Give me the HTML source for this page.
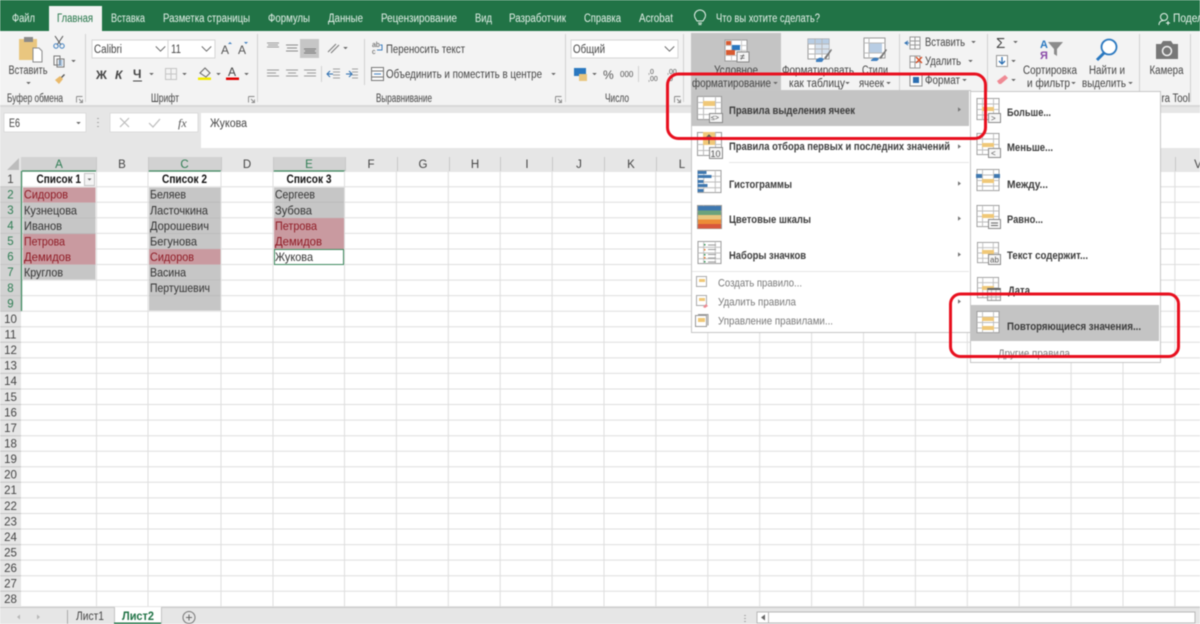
<!DOCTYPE html>
<html><head><meta charset="utf-8">
<style>
html,body{margin:0;padding:0;width:1200px;height:624px;overflow:hidden;background:#fff}
svg{display:block;filter:blur(.45px)}
text{font-family:"Liberation Sans",sans-serif;font-size:11px;fill:#444}
.tab{fill:#e6f1ea;font-size:11.5px}
.rb{fill:#444;font-size:11.5px}
.c{fill:#333;font-size:12px}
.r{fill:#8f1a24;font-size:12px}
.b{fill:#111;font-size:12px;font-weight:bold}
.h{fill:#444;font-size:11.5px;text-anchor:middle}
.g{fill:#2f7d54;font-size:11.5px;text-anchor:middle}
.m{fill:#3c3c3c;font-size:11px;font-weight:bold}
.d{fill:#7a7a7a;font-size:11px}
.gl{stroke:#dedede;stroke-width:1}
.bar{fill:#f0c878}
</style></head><body>
<svg width="1200" height="624" viewBox="0 0 1200 624" xmlns="http://www.w3.org/2000/svg" shape-rendering="geometricPrecision">
<defs>
<symbol id="tbl" viewBox="0 0 25 25" overflow="visible">
<rect x=".5" y=".5" width="24" height="23" fill="#fff" stroke="#9a9a9a"/>
<path d="M6.500 .5V23.500M18.500 .5V23.500M.5 6.500H24.500M.5 12.500H24.500M.5 18.500H24.500" stroke="#bdbdbd" fill="none"/>
</symbol>
<symbol id="arr" viewBox="0 0 6 4" overflow="visible"><path d="M0 0H6L3 3Z" fill="#666"/></symbol>
<symbol id="chev" viewBox="0 0 12 7" overflow="visible"><path d="M.5 .5L6 6L11.500 .5" fill="none" stroke="#555" stroke-width="1"/></symbol>
<symbol id="lau" viewBox="0 0 7 7" overflow="visible"><path d="M.5 .5H6.500M.5 .5V6.500M3 3L6.500 6.500M6.500 3.500V6.500H3.500" fill="none" stroke="#888" stroke-width=".9"/></symbol>
<symbol id="mar" viewBox="0 0 4 6" overflow="visible"><path d="M0 0L4 3L0 6Z" fill="#777"/></symbol>
</defs>

<!-- base -->
<rect width="1200" height="624" fill="#fff"/>
<rect width="1200" height="31" fill="#217346"/>
<rect y="31" width="1200" height="75" fill="#f3f3f3"/>
<rect y="105" width="1200" height="2" fill="#d8d8d8"/>
<rect y="107" width="1200" height="50" fill="#e6e6e6"/>

<!-- tabs -->
<rect x="49" y="6" width="53" height="25" fill="#f3f3f3"/>
<text class="tab" x="12" y="22" textLength="23" lengthAdjust="spacingAndGlyphs">Файл</text>
<text x="57" y="22" textLength="36" lengthAdjust="spacingAndGlyphs" style="fill:#217346;font-size:11.5px">Главная</text>
<text class="tab" x="111" y="22" textLength="34" lengthAdjust="spacingAndGlyphs">Вставка</text>
<text class="tab" x="163" y="22" textLength="87" lengthAdjust="spacingAndGlyphs">Разметка страницы</text>
<text class="tab" x="268" y="22" textLength="42" lengthAdjust="spacingAndGlyphs">Формулы</text>
<text class="tab" x="328" y="22" textLength="35" lengthAdjust="spacingAndGlyphs">Данные</text>
<text class="tab" x="381" y="22" textLength="76" lengthAdjust="spacingAndGlyphs">Рецензирование</text>
<text class="tab" x="475" y="22" textLength="17" lengthAdjust="spacingAndGlyphs">Вид</text>
<text class="tab" x="509" y="22" textLength="57" lengthAdjust="spacingAndGlyphs">Разработчик</text>
<text class="tab" x="584" y="22" textLength="37" lengthAdjust="spacingAndGlyphs">Справка</text>
<text class="tab" x="639" y="22" textLength="34" lengthAdjust="spacingAndGlyphs">Acrobat</text>
<path d="M697 21c-1-2-2.500-3-2.500-5.500a5.500 5.500 0 0 1 11 0c0 2.500-1.500 3.500-2.500 5.500zM698 23h4M698.500 24.500h3" fill="none" stroke="#e6f1ea" stroke-width="1"/>
<text class="tab" x="716" y="22" textLength="104" lengthAdjust="spacingAndGlyphs">Что вы хотите сделать?</text>
<circle cx="1164" cy="17" r="3.500" fill="none" stroke="#e6f1ea"/>
<path d="M1159 25c0-3 2-4.500 5-4.500M1166 23h4M1168 21v4" fill="none" stroke="#e6f1ea"/>
<text class="tab" x="1173" y="22" textLength="30" lengthAdjust="spacingAndGlyphs">Подел</text>

<!-- ribbon separators -->
<path d="M85.500 34V102M257.500 34V102M565.500 34V102M683.500 34V102M899.500 34V102M987.500 34V102M1139.500 34V102M1190.500 34V102" stroke="#d0d0d0"/>

<!-- clipboard group -->
<rect x="19" y="39" width="18" height="21" fill="#e9c67f"/>
<rect x="24" y="37" width="9" height="5" fill="#8a8a8a"/>
<path d="M33 48h6l3 3v11H33z" fill="#fff" stroke="#8a8a8a"/>
<text class="rb" x="8.500" y="74" textLength="39" lengthAdjust="spacingAndGlyphs">Вставить</text>
<use href="#arr" x="26" y="82" width="5" height="3"/>
<path d="M55 36L61 45M63 36L57 45" stroke="#555" fill="none"/>
<circle cx="56" cy="46" r="2.200" fill="none" stroke="#3f7fbf"/><circle cx="62" cy="46" r="2.200" fill="none" stroke="#3f7fbf"/>
<path d="M54 56h6v9h-6zM57 59h7v8h-7z" fill="#f8f8f8" stroke="#777"/>
<path d="M58.500 61h4M58.500 63h4M58.500 65h4" stroke="#3f7fbf" stroke-width=".7"/>
<use href="#arr" x="71" y="60" width="5" height="3"/>
<path d="M55 80l5-4 3 3-4 5z" fill="#e9b96a"/><path d="M61 77l3-3 1 1-3 3z" fill="#555"/>
<text class="rb" x="7" y="102" textLength="56" lengthAdjust="spacingAndGlyphs">Буфер обмена</text>
<use href="#lau" x="76" y="96" width="7" height="7"/>

<!-- font group -->
<rect x="92" y="40" width="76" height="18" fill="#fff" stroke="#d5d5d5"/>
<rect x="168" y="40" width="47" height="18" fill="#fff" stroke="#d5d5d5"/>
<text class="rb" x="94" y="53" textLength="28" lengthAdjust="spacingAndGlyphs">Calibri</text>
<text class="rb" x="171" y="53" textLength="10" lengthAdjust="spacingAndGlyphs">11</text>
<use href="#chev" x="155" y="46" width="11" height="6"/>
<use href="#chev" x="201" y="46" width="11" height="6"/>
<text x="221" y="54" style="font-size:12px;fill:#555">A</text><path d="M228 44l2-2 2 2z" fill="#3f7fbf"/>
<text x="238" y="54" style="font-size:12px;fill:#555">A</text><path d="M244 42l2 2 2-2z" fill="#3f7fbf"/>
<text x="96" y="79" style="font-size:12px;font-weight:bold;fill:#444">Ж</text>
<text x="115" y="79" style="font-size:12px;font-weight:bold;font-style:italic;fill:#444">К</text>
<text x="133" y="78" style="font-size:12px;font-weight:bold;fill:#444">Ч</text><path d="M133 81h9" stroke="#444"/>
<use href="#arr" x="149" y="73" width="5" height="3"/>
<path d="M165.500 68.500h11v11h-11zM171 68.500v11M165.500 74h11" fill="none" stroke="#c4c4c4"/>
<use href="#arr" x="182" y="73" width="5" height="3"/>
<path d="M200 73l5-5 5 5-4 4z" fill="#f4f4f4" stroke="#666"/>
<rect x="198" y="77.500" width="13" height="2.500" fill="#f2e900"/>
<use href="#arr" x="216" y="73" width="5" height="3"/>
<text x="228" y="76" style="font-size:12px;fill:#444">A</text>
<rect x="226" y="77.500" width="13" height="2.500" fill="#e00000"/>
<use href="#arr" x="244" y="73" width="5" height="3"/>
<text class="rb" x="151" y="102" textLength="28" lengthAdjust="spacingAndGlyphs">Шрифт</text>
<use href="#lau" x="248" y="96" width="7" height="7"/>

<!-- alignment -->
<rect x="300" y="39" width="19" height="19" fill="#c6c6c6"/>
<path d="M267 43h12M268 45h10M267 47h12" stroke="#9a9a9a"/>
<path d="M286 45h12M287 48h10M286 51h12" stroke="#8a8a8a"/>
<path d="M304 49h12M305 51h10M304 53h12" stroke="#777"/>
<path d="M328 52l8-8M331 53l8-8" stroke="#777" fill="none"/>
<use href="#arr" x="343" y="47" width="5" height="3"/>
<path d="M267 70h12M267 73h9M267 76h12M286 70h12M288 73h8M286 76h12M304 70h12M307 73h9M304 76h12" stroke="#9a9a9a"/>
<path d="M321.500 66v16" stroke="#d0d0d0"/>
<path d="M333 69h7M333 72h7M333 75h7M333 78h7" stroke="#a0a0a0"/><path d="M333 74h-5M330 71l-3 3 3 3" stroke="#2a6db0" fill="none"/>
<path d="M352 69h6M352 72h6M352 75h6M352 78h6" stroke="#a0a0a0"/><path d="M346 74h5M349 71l3 3-3 3" stroke="#2a6db0" fill="none"/>
<path d="M364.500 39v46" stroke="#d0d0d0"/>
<text x="372" y="47" style="font-size:7px;fill:#555">ab</text><text x="372" y="54" style="font-size:7px;fill:#555">c</text><path d="M380 45h2v5h-5" stroke="#3f7fbf" fill="none"/>
<path d="M371.500 67.500h12v13h-12zM371.500 71h12M371.500 77h12" fill="#fbfbfb" stroke="#777"/><path d="M374 74h7" stroke="#3f7fbf"/>
<text class="rb" x="386" y="53" textLength="79" lengthAdjust="spacingAndGlyphs">Переносить текст</text>
<text class="rb" x="386" y="78" textLength="156" lengthAdjust="spacingAndGlyphs">Объединить и поместить в центре</text>
<use href="#arr" x="551" y="73" width="5" height="3"/>
<text class="rb" x="376" y="102" textLength="56" lengthAdjust="spacingAndGlyphs">Выравнивание</text>
<use href="#lau" x="555" y="96" width="7" height="7"/>

<!-- number -->
<rect x="571" y="40" width="107" height="18" fill="#fff" stroke="#d5d5d5"/>
<text class="rb" x="573" y="53" textLength="32" lengthAdjust="spacingAndGlyphs">Общий</text>
<use href="#chev" x="664" y="46" width="11" height="6"/>
<rect x="574" y="68" width="12" height="8" fill="#2a78c0"/><rect x="579" y="74" width="8" height="7" fill="#e9c67f"/>
<use href="#arr" x="592" y="73" width="5" height="3"/>
<text x="603" y="79" style="font-size:12px;fill:#555">%</text>
<text x="620" y="77" style="font-size:8px;fill:#555">000</text>
<path d="M638.500 66v16" stroke="#d0d0d0"/>
<text x="648" y="74" style="font-size:7px;fill:#555">,0</text><text x="648" y="81" style="font-size:7px;fill:#555">,00</text>
<text x="667" y="74" style="font-size:7px;fill:#555">,00</text><text x="667" y="81" style="font-size:7px;fill:#555">,0</text>
<text class="rb" x="605" y="102" textLength="24" lengthAdjust="spacingAndGlyphs">Число</text>
<use href="#lau" x="674" y="96" width="7" height="7"/>

<!-- cond format button -->
<rect x="691" y="33" width="90" height="58" fill="#c4c4c4"/>
<rect x="725" y="40" width="22" height="21" fill="#fff" stroke="#999"/>
<path d="M731.500 40v21M741.500 40v21M725 45.500h22M725 50.500h22M725 55.500h22" stroke="#c8c8c8"/>
<rect x="726" y="41" width="5" height="4" fill="#d85a30"/><rect x="732" y="45" width="8" height="5" fill="#2a78c0"/><rect x="726" y="50" width="9" height="5" fill="#d85a30"/>
<rect x="737" y="52" width="12" height="10" fill="#f4f4f4" stroke="#888"/>
<text x="740" y="60" style="font-size:9px;fill:#444">≠</text>
<text class="rb" x="714" y="74" textLength="44" lengthAdjust="spacingAndGlyphs">Условное</text>
<text class="rb" x="692" y="87" textLength="79" lengthAdjust="spacingAndGlyphs">форматирование</text>
<use href="#arr" x="773" y="82" width="5" height="3"/>

<!-- format table / styles -->
<rect x="808" y="39" width="21" height="20" fill="#fff" stroke="#999"/>
<rect x="808" y="39" width="21" height="5" fill="#b8cde4"/><rect x="815" y="44" width="14" height="10" fill="#d5e1ef"/>
<path d="M815 39v20M822 39v20M808 44h21M808 49h21M808 54h21" stroke="#b8b8b8"/>
<path d="M816 60c3-3 5-3 8-1l-2 3h-6z" fill="#3f7fbf"/><path d="M824 58l7-9 1 1-6 9z" fill="#777"/>
<rect x="864" y="38" width="21" height="20" fill="#fff" stroke="#999"/>
<rect x="869" y="43" width="13" height="10" fill="#b8cde4"/>
<path d="M864 43h21M864 53h21M869 38v20" stroke="#b8b8b8"/>
<path d="M871 60c3-3 5-3 8-1l-2 2h-6z" fill="#3f7fbf"/><path d="M879 58l7-9 1 1-6 9z" fill="#777"/>
<text class="rb" x="782" y="74" textLength="72" lengthAdjust="spacingAndGlyphs">Форматировать</text>
<text class="rb" x="789" y="87" textLength="56" lengthAdjust="spacingAndGlyphs">как таблицу</text>
<use href="#arr" x="845" y="82" width="5" height="3"/>
<text class="rb" x="862" y="74" textLength="26" lengthAdjust="spacingAndGlyphs">Стили</text>
<text class="rb" x="859" y="87" textLength="25" lengthAdjust="spacingAndGlyphs">ячеек</text>
<use href="#arr" x="886" y="82" width="5" height="3"/>

<!-- cells -->
<path d="M910 37h10v12h-10zM910 41h10M910 45h10M915 37v12" fill="#fbfbfb" stroke="#999"/><path d="M909 43h-3M908 41l-3 2 3 2" stroke="#2a6db0" fill="none"/>
<path d="M910 56h10v12h-10zM915 56v12M910 62h10" fill="#fbfbfb" stroke="#999"/><path d="M916 57l6 6M922 57l-6 6" stroke="#d84a20" stroke-width="1.300"/>
<path d="M910 74h12v12h-12z" fill="#fbfbfb" stroke="#888"/><rect x="913" y="77" width="6" height="6" fill="#2a6db0"/>
<text class="rb" x="925" y="46" textLength="40" lengthAdjust="spacingAndGlyphs">Вставить</text>
<use href="#arr" x="971" y="41" width="5" height="3"/>
<text class="rb" x="925" y="65" textLength="36" lengthAdjust="spacingAndGlyphs">Удалить</text>
<use href="#arr" x="968" y="60" width="5" height="3"/>
<text class="rb" x="925" y="84" textLength="35" lengthAdjust="spacingAndGlyphs">Формат</text>
<use href="#arr" x="962" y="79" width="5" height="3"/>

<!-- editing -->
<text x="996" y="48" style="font-size:15px;fill:#444">Σ</text>
<use href="#arr" x="1013" y="41" width="5" height="3"/>
<rect x="996.500" y="55.500" width="11" height="11" fill="#fff" stroke="#999"/><path d="M1002 57v7M999 61l3 3 3-3" stroke="#2a6db0" stroke-width="1.300" fill="none"/>
<use href="#arr" x="1011" y="60" width="5" height="3"/>
<path d="M997 81l8-6 3 3-7 6h-2z" fill="#ef8a94"/>
<use href="#arr" x="1011" y="79" width="5" height="3"/>
<text x="1040" y="48" style="font-size:11px;font-weight:bold;fill:#2a78c0">А</text>
<text x="1040" y="59" style="font-size:11px;font-weight:bold;fill:#8a4aa8">Я</text>
<path d="M1048 42h15l-6 7v7l-3-2v-5z" fill="#8c8c8c"/>
<text class="rb" x="1023" y="74" textLength="54" lengthAdjust="spacingAndGlyphs">Сортировка</text>
<text class="rb" x="1027" y="87" textLength="43" lengthAdjust="spacingAndGlyphs">и фильтр</text>
<use href="#arr" x="1071" y="82" width="5" height="3"/>
<circle cx="1109" cy="47" r="7.500" fill="#fff" stroke="#2a78c0" stroke-width="1.800"/>
<path d="M1104 53l-7 7" stroke="#2a78c0" stroke-width="3"/>
<text class="rb" x="1089" y="74" textLength="36" lengthAdjust="spacingAndGlyphs">Найти и</text>
<text class="rb" x="1082" y="87" textLength="44" lengthAdjust="spacingAndGlyphs">выделить</text>
<use href="#arr" x="1128" y="82" width="5" height="3"/>
<path d="M1156 44h5l2-3h8l2 3h5v15h-22z" fill="#777"/>
<circle cx="1167" cy="51" r="4.500" fill="#777" stroke="#f3f3f3" stroke-width="1.500"/>
<text class="rb" x="1149.500" y="74" textLength="34" lengthAdjust="spacingAndGlyphs">Камера</text>
<text class="rb" x="1136" y="102" textLength="54" lengthAdjust="spacingAndGlyphs">Camera Tool</text>

<!-- formula bar -->
<rect x="4" y="113" width="82" height="19" fill="#fff" stroke="#dcdcdc"/>
<text class="rb" x="9" y="127" textLength="11" lengthAdjust="spacingAndGlyphs">E6</text>
<use href="#arr" x="76" y="122" width="5" height="3"/>
<path d="M98 118v1M98 122v1M98 126v1" stroke="#999" stroke-width="1.500"/>
<rect x="110" y="113" width="88" height="19" fill="#fff" stroke="#dcdcdc"/>
<path d="M120 118l9 9M129 118l-9 9" stroke="#bcbcbc" stroke-width="1.200"/>
<path d="M149 123l4 4 7-8" stroke="#bcbcbc" stroke-width="1.200" fill="none"/>
<text x="178" y="127" style="font-family:'Liberation Serif',serif;font-style:italic;font-size:12px;fill:#555">fx</text>
<rect x="201" y="113" width="999" height="35" fill="#fff"/>
<text class="rb" x="210" y="127" textLength="37" lengthAdjust="spacingAndGlyphs">Жукова</text>

<!-- col headers -->
<rect x="0" y="157" width="1200" height="15" fill="#e6e6e6"/>
<rect x="21" y="157" width="76" height="14" fill="#d2d2d2"/>
<rect x="148" y="157" width="73" height="14" fill="#d2d2d2"/>
<rect x="273" y="157" width="72" height="14" fill="#d2d2d2"/>
<path d="M22 171H97M148 171H221M273 171H345" stroke="#3f8a60" stroke-width="1.300"/>
<path d="M7 170L19 170V158Z" fill="#bdbdbd"/>
<path d="M96.500 157v14M148.500 157v14M221.500 157v14M273.500 157v14M345.500 157v14M397.500 157v14M449.500 157v14M500.500 157v14M552.500 157v14M604.500 157v14M656.500 157v14" stroke="#c8c8c8"/>
<text class="g" x="59" y="168">A</text><text class="h" x="122" y="168">B</text><text class="g" x="184.500" y="168">C</text><text class="h" x="247" y="168">D</text><text class="g" x="309" y="168">E</text><text class="h" x="371" y="168">F</text><text class="h" x="423" y="168">G</text><text class="h" x="475" y="168">H</text><text class="h" x="527" y="168">I</text><text class="h" x="579" y="168">J</text><text class="h" x="631" y="168">K</text><text class="h" x="682" y="168">L</text>
<path d="M1175.500 157v14" stroke="#c8c8c8"/><text class="h" x="1198" y="168">V</text>

<!-- row headers -->
<rect x="0" y="171" width="21" height="436" fill="#e6e6e6"/>
<rect x="0" y="186.700" width="21" height="124.400" fill="#d2d2d2"/>

<!-- grid -->
<g class="gl">
<path class="gl" fill="none" d="M21 186.700H1200M21 202.300H1200M21 217.800H1200M21 233.400H1200M21 249H1200M21 264.500H1200M21 280.100H1200M21 295.600H1200M21 311.200H1200M21 326.800H1200M21 342.300H1200M21 357.900H1200M21 373.400H1200M21 389H1200M21 404.500H1200M21 420.100H1200M21 435.700H1200M21 451.200H1200M21 466.800H1200M21 482.300H1200M21 497.900H1200M21 513.500H1200M21 529H1200M21 544.600H1200M21 560.100H1200M21 575.700H1200M21 591.200H1200M21 606.800H1200"/>
<path class="gl" fill="none" d="M96.500 171V607M148 171V607M221 171V607M273 171V607M344.500 171V607M396.400 171V607M448.300 171V607M500.200 171V607M552.100 171V607M604 171V607M655.900 171V607M707.800 171V607M759.700 171V607M811.600 171V607M863.500 171V607M915.400 171V607M967.300 171V607M1019.200 171V607M1071.100 171V607M1123 171V607M1174.900 171V607"/>
</g>
<path d="M21.500 171V311" stroke="#3f8a60" stroke-width="1.300"/>
<path d="M0 186.700H21M0 202.300H21M0 217.800H21M0 233.400H21M0 249H21M0 264.500H21M0 280.100H21M0 295.600H21M0 311.200H21M0 326.800H21M0 342.300H21M0 357.900H21M0 373.400H21M0 389H21M0 404.500H21M0 420.100H21M0 435.700H21M0 451.200H21M0 466.800H21M0 482.300H21M0 497.900H21M0 513.500H21M0 529H21M0 544.600H21M0 560.100H21M0 575.700H21M0 591.200H21" stroke="#c4c4c4" fill="none"/>
<text class="h" x="10.500" y="183">1</text>
<text class="g" x="10.500" y="198.500">2</text><text class="g" x="10.500" y="214">3</text><text class="g" x="10.500" y="229.500">4</text><text class="g" x="10.500" y="245">5</text><text class="g" x="10.500" y="260.500">6</text><text class="g" x="10.500" y="276">7</text><text class="g" x="10.500" y="292">8</text><text class="g" x="10.500" y="307.500">9</text>
<text class="h" x="10.500" y="323">10</text><text class="h" x="10.500" y="338.500">11</text><text class="h" x="10.500" y="354">12</text><text class="h" x="10.500" y="369.500">13</text><text class="h" x="10.500" y="385">14</text><text class="h" x="10.500" y="401">15</text><text class="h" x="10.500" y="416.500">16</text><text class="h" x="10.500" y="432">17</text><text class="h" x="10.500" y="447.500">18</text><text class="h" x="10.500" y="463">19</text><text class="h" x="10.500" y="478.500">20</text><text class="h" x="10.500" y="494">21</text><text class="h" x="10.500" y="510">22</text><text class="h" x="10.500" y="525.500">23</text><text class="h" x="10.500" y="541">24</text><text class="h" x="10.500" y="556.500">25</text><text class="h" x="10.500" y="572">26</text><text class="h" x="10.500" y="587.500">27</text><text class="h" x="10.500" y="603">28</text>

<!-- cell fills -->
<rect x="23" y="187.500" width="72.500" height="92" fill="#c6c6c6"/>
<rect x="23" y="187.500" width="72.500" height="15" fill="#c99aa0"/>
<rect x="23" y="233.500" width="72.500" height="31" fill="#c99aa0"/>
<rect x="149" y="187.500" width="71.500" height="123" fill="#c6c6c6"/>
<rect x="149" y="249" width="71.500" height="15.500" fill="#c99aa0"/>
<rect x="274" y="187.500" width="70" height="30.500" fill="#c6c6c6"/>
<rect x="274" y="218" width="70" height="31" fill="#c99aa0"/>
<path d="M23 218H95.500M23 233.500H95.500M149 202.300H220.500M149 218H220.500M149 233.500H220.500M149 280H220.500M149 295.600H220.500M274 202.300H344" stroke="#bcbcbc"/>
<rect x="274.500" y="249.500" width="69" height="15" fill="#fff" stroke="#3f8a60" stroke-width="1"/>

<!-- cells -->
<text class="b" x="36.500" y="183" textLength="44.500" lengthAdjust="spacingAndGlyphs">Список 1</text>
<rect x="84.500" y="173.500" width="10" height="12" fill="#f4f4f4" stroke="#c4c4c4"/><path d="M87.500 178.500h4l-2 2z" fill="#666"/>
<text class="r" x="24" y="198.500" textLength="44" lengthAdjust="spacingAndGlyphs">Сидоров</text>
<text class="c" x="24" y="214.500" textLength="53" lengthAdjust="spacingAndGlyphs">Кузнецова</text>
<text class="c" x="24" y="230" textLength="38" lengthAdjust="spacingAndGlyphs">Иванов</text>
<text class="r" x="24" y="245.500" textLength="41" lengthAdjust="spacingAndGlyphs">Петрова</text>
<text class="r" x="24" y="261" textLength="47" lengthAdjust="spacingAndGlyphs">Демидов</text>
<text class="c" x="24" y="276.500" textLength="39" lengthAdjust="spacingAndGlyphs">Круглов</text>
<text class="b" x="162" y="183" textLength="45" lengthAdjust="spacingAndGlyphs">Список 2</text>
<text class="c" x="150" y="198.500" textLength="36" lengthAdjust="spacingAndGlyphs">Беляев</text>
<text class="c" x="150" y="214.500" textLength="58" lengthAdjust="spacingAndGlyphs">Ласточкина</text>
<text class="c" x="150" y="230" textLength="59" lengthAdjust="spacingAndGlyphs">Дорошевич</text>
<text class="c" x="150" y="245.500" textLength="47" lengthAdjust="spacingAndGlyphs">Бегунова</text>
<text class="r" x="150" y="261" textLength="44" lengthAdjust="spacingAndGlyphs">Сидоров</text>
<text class="c" x="150" y="276.500" textLength="36" lengthAdjust="spacingAndGlyphs">Васина</text>
<text class="c" x="150" y="292" textLength="60" lengthAdjust="spacingAndGlyphs">Пертушевич</text>
<text class="b" x="286.500" y="183" textLength="45" lengthAdjust="spacingAndGlyphs">Список 3</text>
<text class="c" x="275" y="198.500" textLength="40" lengthAdjust="spacingAndGlyphs">Сергеев</text>
<text class="c" x="275" y="214.500" textLength="37" lengthAdjust="spacingAndGlyphs">Зубова</text>
<text class="r" x="275" y="230" textLength="42" lengthAdjust="spacingAndGlyphs">Петрова</text>
<text class="r" x="275" y="245.500" textLength="47" lengthAdjust="spacingAndGlyphs">Демидов</text>
<text class="c" x="275" y="261" textLength="38" lengthAdjust="spacingAndGlyphs">Жукова</text>

<!-- sheet bar -->
<rect y="607" width="1200" height="17" fill="#e6e6e6"/>
<path d="M0 607.500H1200" stroke="#c8c8c8"/>
<path d="M17 617l3-2.500v5zM37 614.500l3 2.500-3 2.500z" fill="#b8b8b8"/>
<path d="M67.500 610v14" stroke="#aaa"/>
<text x="76" y="620" textLength="28" lengthAdjust="spacingAndGlyphs" style="fill:#444;font-size:11.5px">Лист1</text>
<rect x="114" y="607" width="47" height="17" fill="#fff"/>
<path d="M114.500 607V624M161.500 607V624" stroke="#c4c4c4"/>
<rect x="114" y="622.500" width="47" height="1.500" fill="#217346"/>
<text x="122" y="620" textLength="32" lengthAdjust="spacingAndGlyphs" style="fill:#217346;font-weight:bold;font-size:11.5px">Лист2</text>
<circle cx="189" cy="617.500" r="6" fill="none" stroke="#777"/><path d="M186 617.500h6M189 614.500v6" stroke="#666"/>
<path d="M745 615v1M745 618v1M745 621v1" stroke="#999" stroke-width="1.500"/>
<rect x="757" y="612" width="438" height="11" fill="#fff" stroke="#b8b8b8"/>
<path d="M768.500 612v11" stroke="#b8b8b8"/><path d="M761 617.500l4-3v6z" fill="#666"/>

<!-- menu -->
<rect x="691.500" y="90.500" width="279" height="242" fill="#fff" stroke="#c6c6c6"/>
<rect x="692" y="91" width="277" height="35" fill="#c4c4c4"/>
<path d="M729 162.500H969M692 271.500H969" stroke="#e6e6e6"/>

<use href="#tbl" x="697" y="96" width="25" height="25"/>
<rect x="703" y="101" width="12" height="5" class="bar"/>
<rect x="709.500" y="113.500" width="13" height="9" fill="#f4f4f4" stroke="#8a8a8a"/>
<text x="711" y="120" style="font-size:7px;fill:#555">≤&gt;</text>
<text class="m" x="729" y="114" textLength="126" lengthAdjust="spacingAndGlyphs">Правила выделения ячеек</text>
<use href="#mar" x="958" y="107" width="3" height="5"/>

<use href="#tbl" x="697" y="132" width="25" height="25"/>
<rect x="703" y="132" width="12" height="13" class="bar"/>
<path d="M709 144v-9M706.500 137.500l2.500-2.500 2.500 2.500" stroke="#555" fill="none"/>
<rect x="709.500" y="147.500" width="13" height="11" fill="#f4f4f4" stroke="#8a8a8a"/>
<text x="710.500" y="157" style="font-size:9px;fill:#555">10</text>
<text class="m" x="729" y="150" textLength="221" lengthAdjust="spacingAndGlyphs">Правила отбора первых и последних значений</text>
<use href="#mar" x="958" y="144" width="3" height="5"/>

<use href="#tbl" x="697" y="170" width="25" height="24"/>
<path d="M697.500 171h9v3h-9zM697.500 175h14v3h-14zM697.500 180h6v3h-6zM697.500 184h10v3h-10zM697.500 189h6v3h-6z" fill="#3f78b0"/>
<text class="m" x="729" y="188" textLength="63" lengthAdjust="spacingAndGlyphs">Гистограммы</text>
<use href="#mar" x="958" y="181" width="3" height="5"/>

<use href="#tbl" x="697" y="205" width="25" height="25"/>
<rect x="698" y="206" width="23" height="4.500" fill="#3f78b0"/><rect x="698" y="210.500" width="23" height="4.500" fill="#6ba27c"/><rect x="698" y="215" width="23" height="4.500" fill="#e9c67f"/><rect x="698" y="219.500" width="23" height="4.500" fill="#ec8c38"/><rect x="698" y="224" width="23" height="4.500" fill="#d8583c"/>
<text class="m" x="729" y="223" textLength="82" lengthAdjust="spacingAndGlyphs">Цветовые шкалы</text>
<use href="#mar" x="958" y="216" width="3" height="5"/>

<use href="#tbl" x="697" y="241" width="25" height="24"/>
<path d="M704 244h1.500v1.500H704zM704 254h1.500v1.500H704zM704 261h1.500v1.500H704z" fill="#3a9a5a"/>
<path d="M704 249h1.500v1.500H704zM704 257h1.500v1.500H704z" fill="#ec7a28"/>
<path d="M708 245h8M708 249.500h8M708 254.500h8M708 258h8M708 262h8" stroke="#999"/>
<text class="m" x="729" y="259" textLength="77" lengthAdjust="spacingAndGlyphs">Наборы значков</text>
<use href="#mar" x="958" y="252" width="3" height="5"/>

<path d="M696.500 276.500h10v10h-10z" fill="#fff" stroke="#aaa"/><rect x="699" y="279" width="6" height="3" class="bar"/>
<text class="d" x="718" y="286.500" textLength="84" lengthAdjust="spacingAndGlyphs">Создать правило...</text>
<path d="M696.500 295.500h10v10h-10z" fill="#fff" stroke="#aaa"/><rect x="699" y="298" width="6" height="3" class="bar"/><path d="M703 307l3-3 2 2-3 2z" fill="#ef8a94"/>
<text class="d" x="718" y="305.500" textLength="78" lengthAdjust="spacingAndGlyphs">Удалить правила</text>
<path d="M695.500 315.500h11v11h-11zM698 314.500h10v11" fill="#fff" stroke="#999"/><rect x="698" y="318" width="7" height="4" class="bar"/>
<text class="d" x="718" y="324.500" textLength="115" lengthAdjust="spacingAndGlyphs">Управление правилами...</text>
<use href="#mar" x="958" y="299" width="3" height="5"/>

<!-- submenu -->
<rect x="970.500" y="91.500" width="190" height="271" fill="#fff" stroke="#c6c6c6"/>
<use href="#tbl" x="976" y="98" width="24" height="23"/><rect x="982" y="107" width="12" height="4" class="bar"/>
<rect x="988.500" y="113.500" width="12" height="9" fill="#f6f6f6" stroke="#8a8a8a"/><text x="991" y="121" style="font-size:8px;fill:#555">&gt;</text>
<text class="m" x="1007" y="116" textLength="44" lengthAdjust="spacingAndGlyphs">Больше...</text>

<use href="#tbl" x="976" y="133" width="24" height="23"/><rect x="982" y="143" width="12" height="4" class="bar"/>
<rect x="988.500" y="148.500" width="12" height="9" fill="#f6f6f6" stroke="#8a8a8a"/><text x="991" y="156" style="font-size:8px;fill:#555">&lt;</text>
<text class="m" x="1007" y="151" textLength="46" lengthAdjust="spacingAndGlyphs">Меньше...</text>

<use href="#tbl" x="976" y="169" width="24" height="23"/><rect x="976" y="174" width="6" height="4" fill="#3f78b0"/><rect x="994" y="174" width="6" height="4" fill="#3f78b0"/><rect x="982" y="179" width="12" height="4" class="bar"/>
<text class="m" x="1007" y="188" textLength="41" lengthAdjust="spacingAndGlyphs">Между...</text>

<use href="#tbl" x="976" y="205" width="24" height="23"/><rect x="982" y="214" width="12" height="4" class="bar"/>
<rect x="988.500" y="219.500" width="12" height="9" fill="#f6f6f6" stroke="#8a8a8a"/><path d="M991 223h7M991 225.500h7" stroke="#666"/>
<text class="m" x="1007" y="223" textLength="36" lengthAdjust="spacingAndGlyphs">Равно...</text>

<use href="#tbl" x="976" y="242" width="24" height="22"/><rect x="982" y="250" width="12" height="4" class="bar"/>
<rect x="988.500" y="254.500" width="12" height="10" fill="#f6f6f6" stroke="#8a8a8a"/><text x="990" y="262.500" style="font-size:8px;fill:#555">ab</text>
<text class="m" x="1007" y="259" textLength="81" lengthAdjust="spacingAndGlyphs">Текст содержит...</text>

<use href="#tbl" x="976" y="277" width="24" height="22"/><rect x="982" y="286" width="12" height="4" class="bar"/>
<rect x="987.500" y="288.500" width="13" height="12" fill="#f6f6f6" stroke="#999"/><rect x="987.500" y="288" width="13" height="2" fill="#666"/><path d="M991.500 290v10M996 290v10M988 294h12M988 297h12" stroke="#bbb"/>
<text class="m" x="1008" y="294" textLength="22" lengthAdjust="spacingAndGlyphs">Дата</text>

<rect x="971" y="305" width="188" height="36" fill="#c4c4c4"/>
<use href="#tbl" x="976" y="311" width="24" height="23"/><rect x="982" y="317" width="12" height="4" class="bar"/><rect x="982" y="326" width="12" height="4" class="bar"/>
<text class="m" x="1007" y="330" textLength="134" lengthAdjust="spacingAndGlyphs">Повторяющиеся значения...</text>
<text class="d" x="998" y="357" textLength="72" lengthAdjust="spacingAndGlyphs">Другие правила</text>

<!-- red boxes -->
<rect x="667.500" y="74" width="318" height="64.500" rx="11" fill="none" stroke="#e8101f" stroke-width="3"/>
<rect x="950.500" y="294" width="228" height="62.500" rx="10" fill="none" stroke="#e8101f" stroke-width="3"/>
</svg>
</body></html>
